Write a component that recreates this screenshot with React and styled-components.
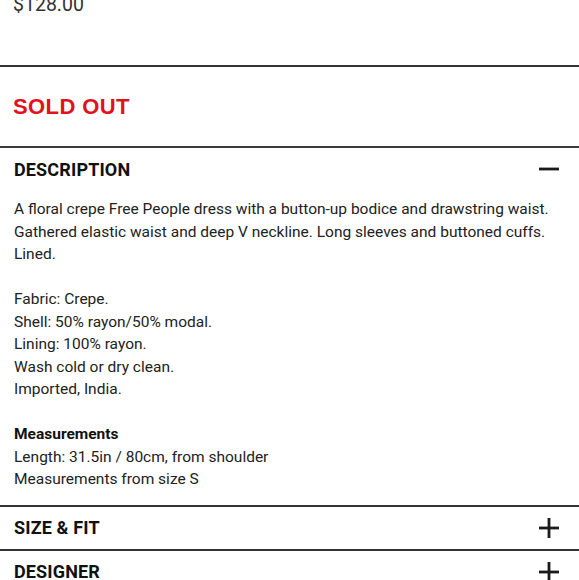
import React from 'react';
import styled, { createGlobalStyle } from 'styled-components';

const Global = createGlobalStyle`
  html, body { margin: 0; padding: 0; background: #fff; overflow: hidden; }
  body { font-family: Roboto, "Liberation Sans", sans-serif; color: #1a1a1a; }
`;

const Page = styled.div`
  width: 579px;
  margin-top: -10px;
`;

const PriceBlock = styled.div`
  height: 77px;
  padding: 0 13px;
  font-size: 19.5px;
  line-height: 30px;
  color: #333;
  border-bottom: 2px solid #333;
  box-sizing: border-box;
`;

const SoldBlock = styled.div`
  height: 81px;
  display: flex;
  align-items: center;
  padding: 0 13px;
  border-bottom: 2px solid #3a3a3a;
  box-sizing: border-box;
`;

const Sold = styled.span`
  font-family: "Liberation Sans", Arial, sans-serif;
  font-weight: 700;
  font-size: 22px;
  letter-spacing: 0.4px;
  color: #e2121a;
  margin-top: 1px;
`;

const Section = styled.div`
  border-bottom: 2px solid #333;
`;

const Header = styled.div`
  height: 42px;
  display: flex;
  align-items: center;
  justify-content: space-between;
  padding: 0 20px 0 14px;
`;

const Title = styled.h2`
  margin: 0;
  font-size: 18px;
  font-weight: 700;
  color: #111;
  letter-spacing: 0.15px;
`;

const Body = styled.div`
  padding: 8px 14px 14px 14px;
  font-size: 15.5px;
  line-height: 22.5px;
  color: #222;
`;

const Strong = styled.strong`
  font-weight: 700;
  color: #111;
`;

const Icon = ({ open }) => (
  <svg width="20" height="20" viewBox="0 0 20 20">
    <rect x="0" y="8.6" width="20" height="2.8" fill="#1a1a1a" />
    {!open && <rect x="8.6" y="0" width="2.8" height="20" fill="#1a1a1a" />}
  </svg>
);

export default function App() {
  return (
    <Page>
      <Global />
      <PriceBlock>$128.00</PriceBlock>
      <SoldBlock>
        <Sold>SOLD OUT</Sold>
      </SoldBlock>
      <Section>
        <Header>
          <Title>DESCRIPTION</Title>
          <Icon open />
        </Header>
        <Body>
          A floral crepe Free People dress with a button-up bodice and drawstring waist.
          Gathered elastic waist and deep V neckline. Long sleeves and buttoned cuffs.
          Lined.
          <br />
          <br />
          Fabric: Crepe.
          <br />
          Shell: 50% rayon/50% modal.
          <br />
          Lining: 100% rayon.
          <br />
          Wash cold or dry clean.
          <br />
          Imported, India.
          <br />
          <br />
          <Strong>Measurements</Strong>
          <br />
          Length: 31.5in / 80cm, from shoulder
          <br />
          Measurements from size S
        </Body>
      </Section>
      <Section>
        <Header>
          <Title>SIZE &amp; FIT</Title>
          <Icon />
        </Header>
      </Section>
      <Section>
        <Header>
          <Title>DESIGNER</Title>
          <Icon />
        </Header>
      </Section>
    </Page>
  );
}
